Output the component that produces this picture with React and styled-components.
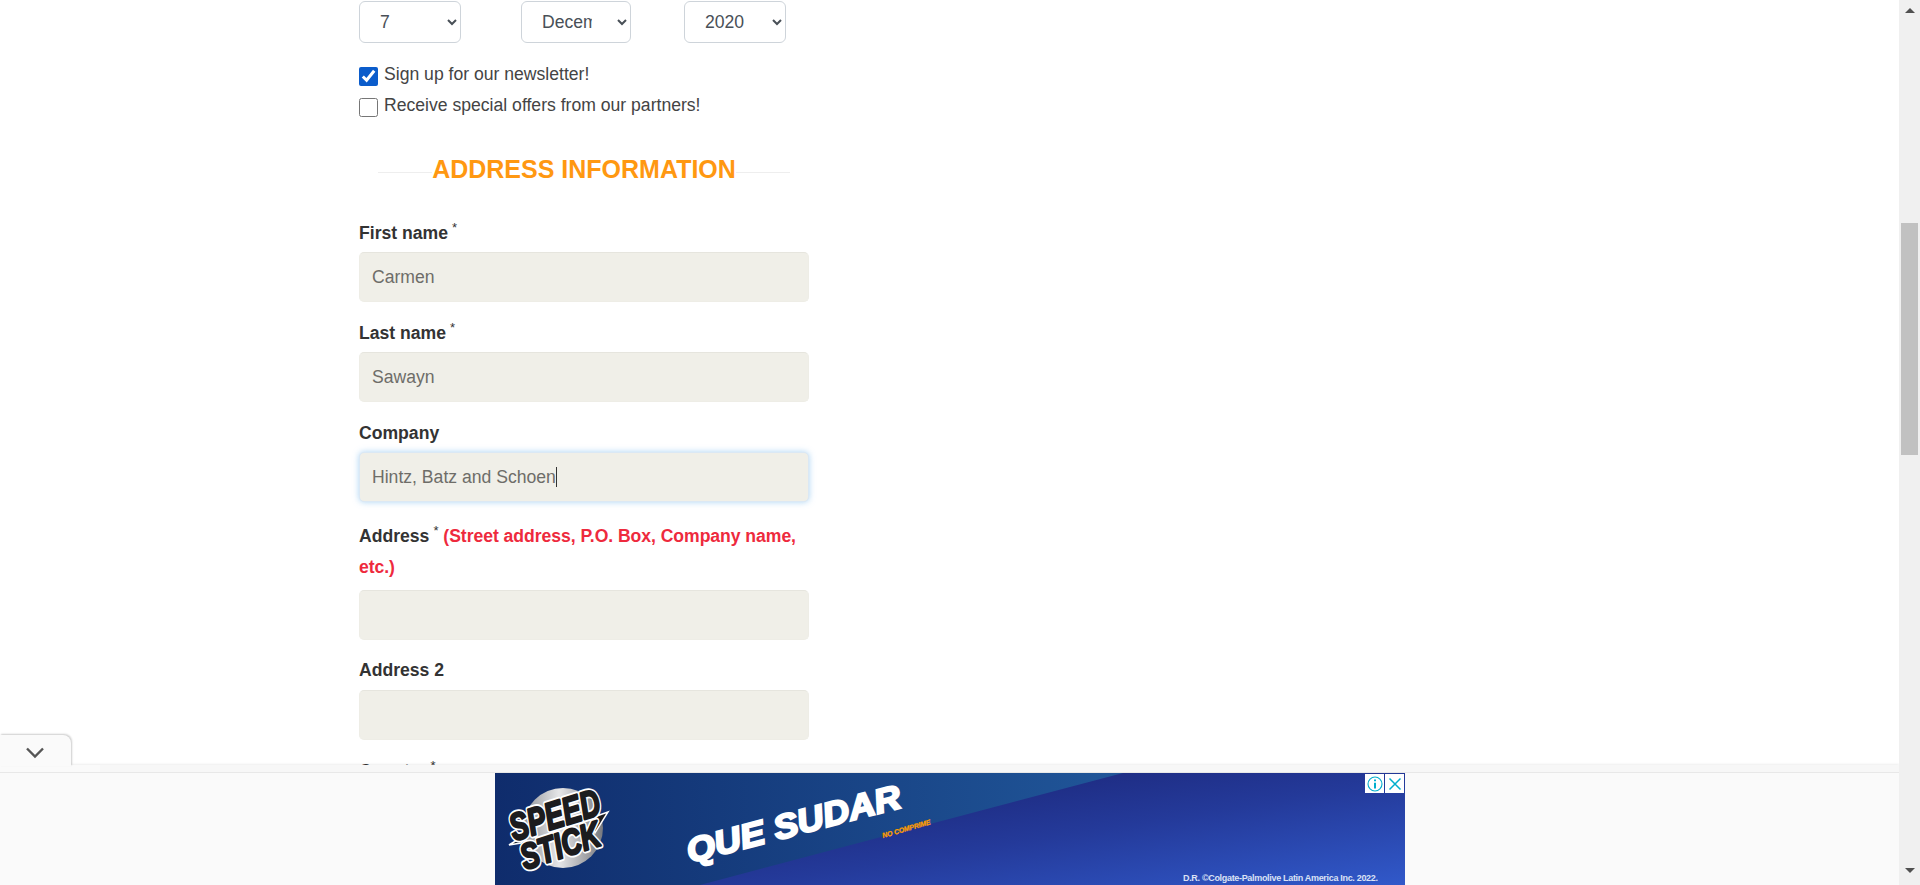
import React from "react";
import styled, { createGlobalStyle, css } from "styled-components";

const GlobalStyle = createGlobalStyle`
  html,
  body {
    margin: 0;
    height: 100%;
    overflow: hidden;
    background: #fff;
    font-family: "Liberation Sans", Arial, sans-serif;
    font-size: 17.6px;
    color: #333;
  }
`;

const Page = styled.div`
  display: flex;
  height: 885px;
`;

const Main = styled.main`
  flex: 1;
  position: relative;
  overflow: hidden;
`;

const Form = styled.form`
  width: 450px;
  margin-left: 359px;
  padding-top: 1px;
`;

const DateRow = styled.div`
  display: grid;
  grid-template-columns: 162px 163px 1fr;
`;

const Select = styled.select`
  width: ${(p) => p.$width}px;
  height: 42px;
  padding: 0 ${(p) => p.$padRight}px 0 16px;
  background: #fff;
  border: 1px solid #ced4da;
  border-radius: 6px;
  font: inherit;
  color: #495057;
`;

const Checks = styled.div`
  margin-top: 16px;
`;

const CheckRow = styled.label`
  display: flex;
  height: 31px;
  line-height: 31px;
  color: #444;
`;

const Checkbox = styled.input`
  width: 19px;
  height: 19px;
  margin: 8px 6px 0 0;
  accent-color: #0b5ccb;
`;

const Heading = styled.h2`
  display: flex;
  margin: 32px 19px 32px;
  height: 32px;
  line-height: 32px;
  font-size: 25px;
  font-weight: 700;
  color: #ff9811;

  &:before,
  &:after {
    content: "";
    flex: 1;
    height: 1px;
    margin-top: 19px;
    background: #eee;
  }
`;

const Field = styled.div`
  margin-bottom: 15px;
`;

const Label = styled.label`
  display: block;
  padding: ${(p) => (p.$long ? "4px 0 4px" : p.$flush ? "0 0 1px" : "1px 0 0")};
  margin-bottom: 3px;
  line-height: 31px;
  font-weight: 700;
  color: #333;
`;

const Star = styled.sup`
  margin-left: 4px;
  font-size: 13px;
  font-weight: 400;
  line-height: 0;
`;

const Hint = styled.span`
  color: #ee2a3d;
  letter-spacing: -0.05px;
`;

const boxStyles = css`
  display: block;
  box-sizing: border-box;
  width: 450px;
  height: 50px;
  padding: 0 12px;
  background: #f0efe8;
  border: 1px solid #eeede6;
  border-top-color: #e6e5de;
  border-radius: 5px;
  font: inherit;
  line-height: 48px;
  color: #6e6d68;
  outline: none;
`;

const Input = styled.input`
  ${boxStyles}
`;

const FocusedBox = styled.div`
  ${boxStyles}
  border-color: #dbe8f4;
  box-shadow: 0 0 6px rgba(102, 175, 233, 0.55);
`;

const Caret = styled.span`
  display: inline-block;
  width: 1.5px;
  height: 20px;
  vertical-align: -4px;
  background: #333;
`;

const BottomBar = styled.aside`
  position: absolute;
  left: 0;
  right: 0;
  bottom: 0;
  height: 120px;
  background: #fafafa;
  box-shadow: 0 -1px 2px rgba(0, 0, 0, 0.07);
`;

const BarStrip = styled.div`
  height: 7px;
  background: #f7f7f7;
  border-bottom: 1px solid #e8e8e8;

  &:before {
    content: "";
    display: block;
    width: 100px;
    height: 7px;
    background: #fafafa;
  }
`;

const CollapseTab = styled.button`
  position: absolute;
  left: 0;
  top: -30px;
  width: 71px;
  height: 31px;
  padding: 4px 2px 0 0;
  display: flex;
  align-items: center;
  justify-content: center;
  background: #fafafa;
  border: 0;
  border-radius: 0 8px 0 0;
  box-shadow: 1px -1px 2px rgba(0, 0, 0, 0.2);
`;

const AdSlot = styled.div`
  position: relative;
  width: 910px;
  height: 112px;
  margin-left: 495px;
`;

const AdArt = styled.svg`
  display: block;
`;

const AdControls = styled.div`
  position: absolute;
  top: 1px;
  right: 1px;
  display: flex;
  gap: 1px;
`;

const AdButton = styled.span`
  display: flex;
  align-items: center;
  justify-content: center;
  width: 19px;
  height: 19px;
  background: #fff;
`;

const ScrollTrack = styled.div`
  width: 21px;
  display: flex;
  flex-direction: column;
  align-items: center;
  background: #f0f0f0;
`;

const ScrollArrow = styled.span`
  width: 0;
  height: 0;
  margin-top: ${(p) => p.$top}px;
  border-left: 5px solid transparent;
  border-right: 5px solid transparent;
  ${(p) =>
    p.$down
      ? "border-top: 5px solid #505050;"
      : "border-bottom: 5px solid #505050;"}
`;

const ScrollThumb = styled.div`
  width: 17px;
  height: 232px;
  margin-top: 210px;
  background: #c1c1c1;
`;

const months = ["October", "November", "December"];

function RequiredField({ name, value }) {
  return (
    <Field>
      <Label>
        {name}
        <Star>*</Star>
      </Label>
      <Input defaultValue={value} />
    </Field>
  );
}

function LogoWord({ x, y, angle, size, length, children }) {
  const shared = {
    transform: `translate(${x} ${y}) rotate(${angle})`,
    fontSize: size,
    textLength: length,
    lengthAdjust: "spacingAndGlyphs",
    strokeLinejoin: "round",
  };
  return (
    <>
      <text {...shared} fill="#fff" stroke="#fff" strokeWidth="6">{children}</text>
      <text {...shared} fill="#1c1c1e" stroke="#1c1c1e" strokeWidth="2.4">{children}</text>
    </>
  );
}

function Ad() {
  return (
    <AdArt width="910" height="112" viewBox="0 0 910 112">
      <defs>
        <linearGradient id="band" x1="0" y1="0" x2="1" y2="0">
          <stop offset="0" stopColor="#0f2c6c" />
          <stop offset="1" stopColor="#205699" />
        </linearGradient>
        <linearGradient id="deep" x1="0.1" y1="0.3" x2="1" y2="1">
          <stop offset="0" stopColor="#1a2272" />
          <stop offset="0.5" stopColor="#243a9a" />
          <stop offset="1" stopColor="#3159ca" />
        </linearGradient>
        <linearGradient id="silver" x1="0" y1="0" x2="1" y2="0">
          <stop offset="0" stopColor="#8f9297" />
          <stop offset="0.45" stopColor="#e6e6e8" />
          <stop offset="1" stopColor="#77797e" />
        </linearGradient>
      </defs>
      <rect width="910" height="112" fill="url(#deep)" />
      <polygon points="0,0 628,0 205,112 0,112" fill="url(#band)" />

      <circle cx="68" cy="55" r="40" fill="url(#silver)" />
      <polygon points="14,72 30,62 26,70" fill="#1c1c1e" stroke="#fff" strokeWidth="1.5" />
      <polygon points="113,39 96,45 100,60" fill="#1c1c1e" stroke="#fff" strokeWidth="1.5" />
      <g fontFamily="Liberation Sans" fontWeight="700" fontStyle="italic">
        <LogoWord x={19} y={68} angle={-17} size={38} length={93}>SPEED</LogoWord>
        <LogoWord x={30} y={97} angle={-18} size={36} length={82}>STICK</LogoWord>
      </g>

      <g fontFamily="Liberation Sans" fontWeight="700" fontStyle="italic">
        <text transform="translate(195 90) rotate(-14.7)" fontSize="34" textLength="220" lengthAdjust="spacingAndGlyphs" fill="#fff" stroke="#fff" strokeWidth="2.2">QUE SUDAR</text>
        <text transform="translate(388 65) rotate(-16)" fontSize="7" textLength="50" fill="#ff9c00" stroke="#ff9c00" strokeWidth="0.3">NO COMPRIME</text>
      </g>

      <text x="688" y="108" fontFamily="Liberation Sans" fontWeight="700" fontSize="9" textLength="195" fill="#dbe2f5">
        D.R. ©Colgate-Palmolive Latin America Inc. 2022.
      </text>
    </AdArt>
  );
}

export default function App() {
  return (
    <Page>
      <GlobalStyle />
      <Main>
        <Form>
          <DateRow>
            <Select $width={102} $padRight={0} defaultValue="7">
              <option>6</option>
              <option>7</option>
            </Select>
            <Select $width={110} $padRight={22} defaultValue="December">
              {months.map((m) => (
                <option key={m}>{m}</option>
              ))}
            </Select>
            <Select $width={102} $padRight={0} defaultValue="2020">
              <option>2020</option>
              <option>2021</option>
            </Select>
          </DateRow>

          <Checks>
            <CheckRow>
              <Checkbox type="checkbox" defaultChecked />
              Sign up for our newsletter!
            </CheckRow>
            <CheckRow>
              <Checkbox type="checkbox" />
              Receive special offers from our partners!
            </CheckRow>
          </Checks>

          <Heading>ADDRESS INFORMATION</Heading>

          <RequiredField name="First name" value="Carmen" />
          <RequiredField name="Last name" value="Sawayn" />

          <Field>
            <Label>Company</Label>
            <FocusedBox>
              Hintz, Batz and Schoen
              <Caret />
            </FocusedBox>
          </Field>

          <Field>
            <Label $long>
              Address<Star>*</Star>{" "}
              <Hint>(Street address, P.O. Box, Company name, etc.)</Hint>
            </Label>
            <Input />
          </Field>

          <Field>
            <Label $flush>Address 2</Label>
            <Input />
          </Field>

          <RequiredField name="Country" />
        </Form>

        <BottomBar>
          <CollapseTab type="button" aria-label="Collapse">
            <svg width="20" height="12" viewBox="0 0 20 12" fill="none">
              <path d="M2 1.5 L10 9.5 L18 1.5" stroke="#555" strokeWidth="2.4" />
            </svg>
          </CollapseTab>
          <BarStrip />
          <AdSlot>
            <Ad />
            <AdControls>
              <AdButton>
                <svg width="16" height="16" viewBox="0 0 16 16" fill="none" stroke="#00aecd">
                  <circle cx="8" cy="8" r="7" strokeWidth="1.1" />
                  <path d="M8 6.8 V12.5" strokeWidth="2" />
                  <path d="M8 3.5 V5.2" strokeWidth="2" />
                </svg>
              </AdButton>
              <AdButton>
                <svg width="14" height="14" viewBox="0 0 14 14" fill="none" stroke="#00aecd" strokeWidth="1.5">
                  <path d="M1.5 1.5 L12.5 12.5 M12.5 1.5 L1.5 12.5" />
                </svg>
              </AdButton>
            </AdControls>
          </AdSlot>
        </BottomBar>
      </Main>

      <ScrollTrack>
        <ScrollArrow $top={8} />
        <ScrollThumb />
        <ScrollArrow $top={413} $down />
      </ScrollTrack>
    </Page>
  );
}
